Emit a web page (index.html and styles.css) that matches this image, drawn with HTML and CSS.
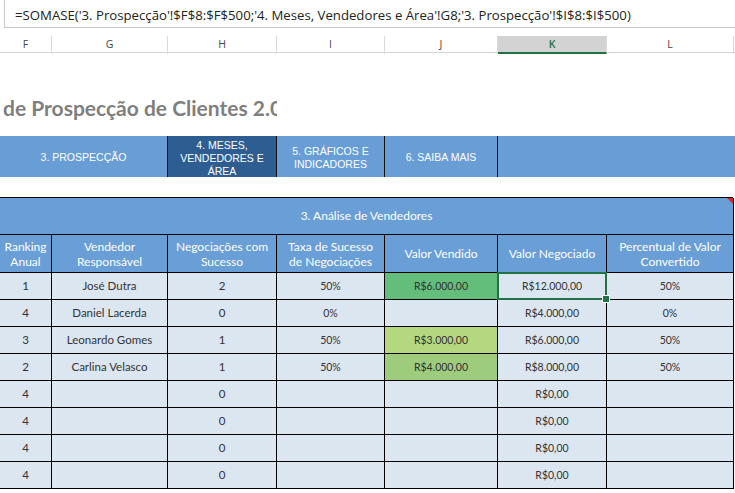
FILE: index.html
```html
<!DOCTYPE html>
<html lang="pt">
<head>
<meta charset="utf-8">
<title>Análise de Vendedores</title>
<link rel="stylesheet" href="styles.css">
</head>
<body>
<div class="formula-wrap">
  <div class="formula">=SOMASE('3. Prospecção'!$F$8:$F$500;'4. Meses, Vendedores e Área'!G8;'3. Prospecção'!$I$8:$I$500)</div>
</div>
<div class="colheads">
  <div class="ch">F</div>
  <div class="ch">G</div>
  <div class="ch">H</div>
  <div class="ch">I</div>
  <div class="ch">J</div>
  <div class="ch sel">K</div>
  <div class="ch">L</div>
</div>
<div class="title-area">
  <div class="title">de Prospecção de Clientes 2.0</div>
</div>
<div class="nav">
  <div class="tab t-span2">3. PROSPECÇÃO</div>
  <div class="tab active">4. MESES, VENDEDORES E ÁREA</div>
  <div class="tab">5. GRÁFICOS E INDICADORES</div>
  <div class="tab">6. SAIBA MAIS</div>
  <div class="tab t-span2 last"></div>
</div>
<div class="gap"></div>
<div class="table">
  <div class="caption">3. Análise de Vendedores<span class="comment"></span></div>
  <div class="th">Ranking Anual</div>
  <div class="th">Vendedor Responsável</div>
  <div class="th">Negociações com Sucesso</div>
  <div class="th">Taxa de Sucesso de Negociações</div>
  <div class="th">Valor Vendido</div>
  <div class="th">Valor Negociado</div>
  <div class="th">Percentual de Valor Convertido</div>

  <div class="td">1</div><div class="td name">José Dutra</div><div class="td">2</div><div class="td sm">50%</div><div class="td sm g1">R$6.000,00</div><div class="td sm selcell">R$12.000,00</div><div class="td sm">50%</div>
  <div class="td">4</div><div class="td name">Daniel Lacerda</div><div class="td">0</div><div class="td sm">0%</div><div class="td sm"></div><div class="td sm">R$4.000,00</div><div class="td sm">0%</div>
  <div class="td">3</div><div class="td name">Leonardo Gomes</div><div class="td">1</div><div class="td sm">50%</div><div class="td sm g3">R$3.000,00</div><div class="td sm">R$6.000,00</div><div class="td sm">50%</div>
  <div class="td">2</div><div class="td name">Carlina Velasco</div><div class="td">1</div><div class="td sm">50%</div><div class="td sm g2">R$4.000,00</div><div class="td sm">R$8.000,00</div><div class="td sm">50%</div>
  <div class="td">4</div><div class="td name"></div><div class="td">0</div><div class="td sm"></div><div class="td sm"></div><div class="td sm">R$0,00</div><div class="td sm"></div>
  <div class="td">4</div><div class="td name"></div><div class="td">0</div><div class="td sm"></div><div class="td sm"></div><div class="td sm">R$0,00</div><div class="td sm"></div>
  <div class="td">4</div><div class="td name"></div><div class="td">0</div><div class="td sm"></div><div class="td sm"></div><div class="td sm">R$0,00</div><div class="td sm"></div>
  <div class="td">4</div><div class="td name"></div><div class="td">0</div><div class="td sm"></div><div class="td sm"></div><div class="td sm">R$0,00</div><div class="td sm"></div>
</div>
</body>
</html>
```

FILE: styles.css
```css
* { box-sizing: border-box; }

html, body {
  margin: 0;
  padding: 0;
  background: #ffffff;
  overflow: hidden;
}

body {
  width: 735px;
  height: 493px;
  font-family: "Lato", "Open Sans", sans-serif;
}

.formula-wrap {
  height: 37px;
  padding-left: 4px;
}

.formula {
  height: 29px;
  margin-top: -1px;
  border: 1px solid #c8c8c8;
  border-right: none;
  padding-left: 10px;
  font-family: "Open Sans", "Noto Sans", sans-serif;
  font-size: 13.2px;
  line-height: 30px;
  color: #222;
  white-space: nowrap;
  overflow: hidden;
}

.colheads {
  display: grid;
  grid-template-columns: 52px 116px 109px 108px 113px 109px 127px;
  height: 17px;
  border-bottom: 1px solid #d4d4d4;
}

.ch {
  font-family: "Open Sans", "Noto Sans", sans-serif;
  font-size: 10.5px;
  color: #444;
  text-align: center;
  line-height: 17px;
  border-right: 1px solid #dadada;
}

.ch.sel {
  background: #d3d3d3;
  border-bottom: 2px solid #217346;
  color: #217346;
  font-weight: 600;
  line-height: 16px;
}

.title-area {
  height: 83px;
  width: 277px;
  overflow: hidden;
  padding-top: 42px;
}

.title {
  font-family: "Lato", "Open Sans", sans-serif;
  font-weight: 700;
  font-size: 21px;
  color: #7f7f7f;
  white-space: nowrap;
  padding-left: 3px;
  line-height: 26px;
}

.nav {
  display: grid;
  grid-template-columns: 52px 116px 109px 108px 113px 109px 128px;
  height: 41px;
  background: #699dd6;
  overflow: hidden;
}

.tab {
  font-family: "Liberation Sans", Arial, sans-serif;
  font-size: 10.5px;
  color: #ffffff;
  text-align: center;
  display: flex;
  align-items: center;
  justify-content: center;
  line-height: 13px;
  padding: 1px 12px 0;
  border-right: 1px solid #111;
}

.tab.t-span2 { grid-column: span 2; }
.tab.last { border-right: none; }

.tab.active {
  background: #2e5d92;
  align-items: flex-start;
  padding: 3px 8px 0;
  border-left: 1px solid #111;
  margin-left: -1px;
}

.gap { height: 20px; }

.table {
  display: grid;
  grid-template-columns: 52px 116px 109px 108px 113px 109px 127px;
  grid-template-rows: 37px 38px repeat(8, 27px);
  border-top: 1px solid #000;
  border-left: 1px solid #000;
  width: 734px;
  margin-left: -1px;
}

.caption {
  grid-column: 1 / -1;
  position: relative;
  background: #6a9ed7;
  color: #ffffff;
  font-size: 12px;
  text-align: center;
  line-height: 36px;
  border-right: 1px solid #000;
  border-bottom: 1px solid #000;
}

.comment {
  position: absolute;
  top: 0;
  right: 0;
  width: 0;
  height: 0;
  border-top: 6px solid #d9252a;
  border-left: 6px solid transparent;
}

.th {
  background: #6a9ed7;
  color: #ffffff;
  font-size: 12px;
  line-height: 15px;
  text-align: center;
  display: flex;
  align-items: center;
  justify-content: center;
  padding: 0 3px;
  border-right: 1px solid #000;
  border-bottom: 1px solid #000;
}

.td {
  background: #dce6f1;
  color: #333;
  font-size: 11.5px;
  text-align: center;
  line-height: 26px;
  border-right: 1px solid #000;
  border-bottom: 1px solid #000;
}

.td.sm { font-size: 10.5px; }
.td.name { font-size: 11.5px; }

.td.g1 { background: #63be7b; }
.td.g2 { background: #9dcd7c; }
.td.g3 { background: #b5d77f; }

.td.selcell {
  position: relative;
}

.td.selcell::before {
  content: "";
  position: absolute;
  left: -1px;
  top: -1px;
  right: -1px;
  bottom: -1px;
  border: 2px solid #217346;
}

.td.selcell::after {
  content: "";
  position: absolute;
  right: -4px;
  bottom: -4px;
  width: 6px;
  height: 6px;
  background: #217346;
  border: 1px solid #ffffff;
}
```
